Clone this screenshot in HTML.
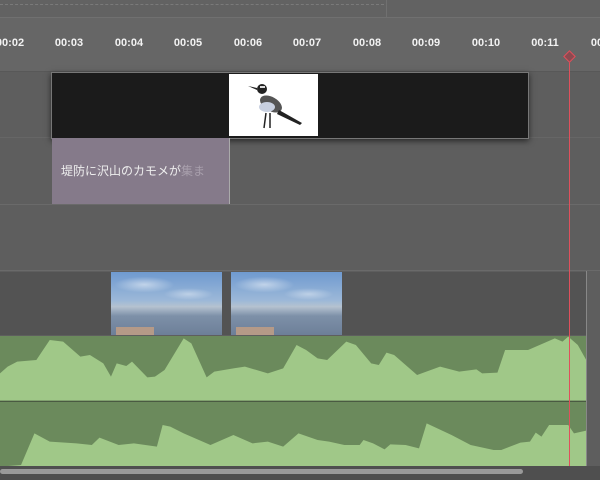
<!DOCTYPE html>
<html><head><meta charset="utf-8"><style>
body{margin:0;width:600px;height:480px;overflow:hidden;background:#5e5e5e;position:relative;font-family:"Liberation Sans","Noto Sans CJK JP",sans-serif}
.a{position:absolute}
.lbl{position:absolute;top:37px;width:50px;margin-left:-25px;text-align:center;color:#f2f2f2;font-size:11px;font-weight:bold}
.th{background:radial-gradient(ellipse 30px 8px at 30% 20%,rgba(255,255,255,.5),transparent),radial-gradient(ellipse 25px 6px at 70% 35%,rgba(255,255,255,.4),transparent),linear-gradient(#6f9ad0,#9cb8d8 45%,#b5c2d0 55%,#7d90a8 70%,#6d7f98)}
</style></head><body>
<div class="a" style="left:0;top:0;width:600px;height:17px;background:#626262"></div>
<div class="a" style="left:0;top:4px;width:384px;border-top:1px dashed #7a7a7a"></div>
<div class="a" style="left:386px;top:0;width:1px;height:17px;background:#707070"></div>
<div class="a" style="left:0;top:17px;width:600px;height:1px;background:#707070"></div>
<div class="a" style="left:0;top:18px;width:600px;height:53px;background:#666"></div>
<div class="a" style="left:0;top:71px;width:600px;height:1px;background:#585858"></div>
<div class="lbl" style="left:10px">00:02</div>
<div class="lbl" style="left:69px">00:03</div>
<div class="lbl" style="left:129px">00:04</div>
<div class="lbl" style="left:188px">00:05</div>
<div class="lbl" style="left:248px">00:06</div>
<div class="lbl" style="left:307px">00:07</div>
<div class="lbl" style="left:367px">00:08</div>
<div class="lbl" style="left:426px">00:09</div>
<div class="lbl" style="left:486px">00:10</div>
<div class="lbl" style="left:545px">00:11</div>
<div class="lbl" style="left:605px">00:12</div>
<div class="a" style="left:0;top:137px;width:600px;height:1px;background:#666"></div>
<div class="a" style="left:0;top:204px;width:600px;height:1px;background:#6a6a6a"></div>
<div class="a" style="left:0;top:270px;width:600px;height:1px;background:#6a6a6a"></div>
<div class="a" style="left:51px;top:72px;width:476px;height:65px;background:#1b1b1b;border:1px solid #777;box-shadow:0 2px 6px rgba(0,0,0,.6)"></div>
<div class="a" style="left:229px;top:74px;width:89px;height:62px;background:#fff">
<svg width="89" height="62" viewBox="0 0 89 62"><ellipse cx="42" cy="30" rx="12" ry="7" fill="#555" transform="rotate(30 42 30)"/><ellipse cx="38" cy="33" rx="8" ry="5" fill="#c8d0e0"/><circle cx="33" cy="15" r="5" fill="#222"/><rect x="31" y="12" width="5" height="2" fill="#ddd"/><path d="M28 14 L19 12 L28 16Z" fill="#222"/><path d="M50 36 L73 49 L71 51 L48 40Z" fill="#222"/><path d="M37 39 L35 54 M41 39 L41 54" stroke="#222" stroke-width="1.5"/></svg></div>
<div class="a" style="left:52px;top:138px;width:177px;height:66px;background:#857a8a;border-right:1px solid #aaa;overflow:hidden;white-space:nowrap"><span style="position:absolute;left:9px;top:24px;font-size:12px;color:#eee">堤防に沢山のカモメが<span style="color:#a89fac">集ま</span></span></div>
<div class="a" style="left:0;top:272px;width:586px;height:63px;background:#535353"></div>
<div class="a th" style="left:111px;top:272px;width:111px;height:63px"></div>
<div class="a th" style="left:231px;top:272px;width:111px;height:63px"></div>
<div class="a" style="left:116px;top:327px;width:38px;height:8px;background:#b59a88"></div>
<div class="a" style="left:236px;top:327px;width:38px;height:8px;background:#b59a88"></div>
<svg class="a" style="left:0;top:260px" width="600" height="220" viewBox="0 0 1568 660" preserveAspectRatio="none">
<rect x="0" y="228" width="1532" height="195" fill="#6b8a5c"/>
<rect x="0" y="425" width="1532" height="195" fill="#6b8a5c"/>
<rect x="0" y="422" width="1532" height="3" fill="#3c4a36"/>
<polygon fill="#a0c888" points="0,340 20,320 45,305 95,300 130,240 165,245 210,290 235,285 270,310 290,350 305,310 330,318 345,305 385,352 405,350 430,330 480,235 500,250 540,352 560,335 610,325 640,320 700,340 740,325 775,255 800,270 830,295 855,300 905,245 930,255 970,310 990,315 1010,278 1030,285 1090,345 1150,320 1200,335 1245,328 1260,340 1300,338 1320,270 1380,270 1450,235 1470,245 1485,230 1510,255 1532,300 1532,422 0,422"/>
<polygon fill="#a0c888" points="0,620 55,615 90,520 130,545 200,550 240,555 260,533 310,555 350,550 410,560 425,495 445,500 480,520 550,555 610,525 660,550 700,545 740,560 780,520 830,540 860,545 900,555 940,555 950,540 975,550 1005,568 1020,553 1060,555 1095,565 1115,490 1180,525 1230,555 1290,570 1310,570 1360,548 1385,545 1400,518 1415,530 1435,495 1485,495 1500,520 1532,512 1532,620"/>
</svg>
<div class="a" style="left:586px;top:271px;width:1px;height:196px;background:#888"></div>
<div class="a" style="left:0;top:466px;width:600px;height:14px;background:#4f4f4f"></div>
<div class="a" style="left:0;top:469px;width:523px;height:5px;border-radius:3px;background:#9a9a9a"></div>
<div class="a" style="left:569px;top:60px;width:1px;height:406px;background:#e0505c"></div>
<div class="a" style="left:565px;top:52px;width:7px;height:7px;border:1px solid #e0505c;transform:rotate(45deg);background:#8b4a50"></div>
</body></html>
